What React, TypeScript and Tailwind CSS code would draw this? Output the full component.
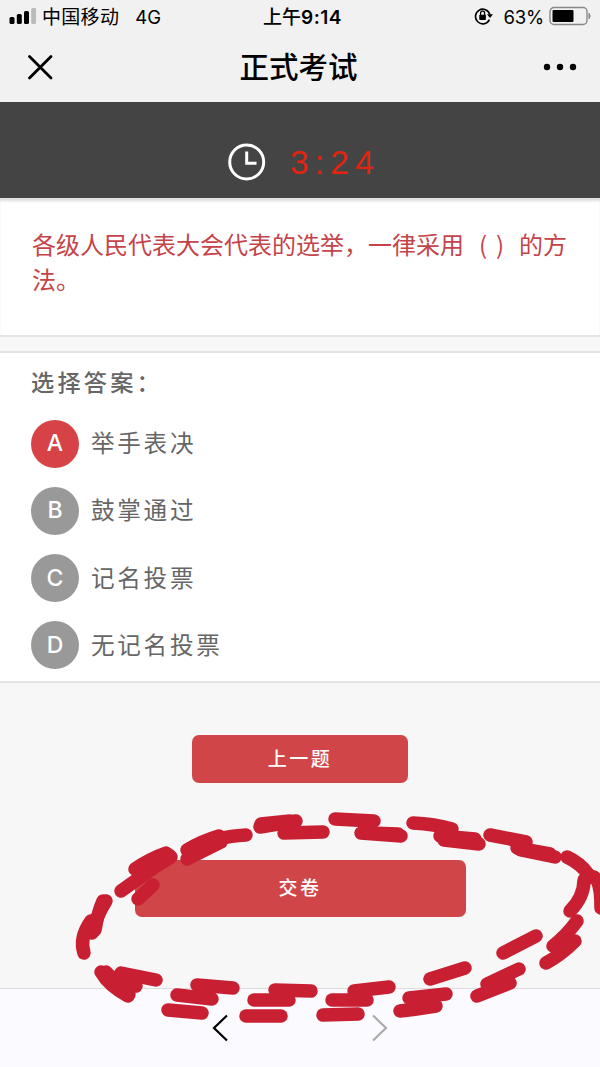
import { useState } from "react";

const OPTIONS = [
  { key: "A", text: "举手表决" },
  { key: "B", text: "鼓掌通过" },
  { key: "C", text: "记名投票" },
  { key: "D", text: "无记名投票" },
];

// hand-drawn dashes circling the submit button
const STROKES = [
  "M135 869Q149 859 166 853",
  "M138 872Q152 862 169 855",
  "M140 876L171 857",
  "M121 891L152 869",
  "M138 899L153 885",
  "M187 850Q202 841 219 836",
  "M194 853L221 840",
  "M187 859L221 842",
  "M200 846Q215 837 246 835",
  "M106 901Q96 917 92 933",
  "M103 901Q98 912 95 930",
  "M91 921Q79 938 84 953",
  "M101 972Q109 986 128 996",
  "M106 972Q116 984 129 994",
  "M104 974L136 986",
  "M121 973L156 980",
  "M197 985L233 988",
  "M177 995L212 999",
  "M168 1010L202 1013",
  "M260 827L296 821",
  "M261 824L290 821",
  "M284 833L323 832",
  "M335 819L374 821",
  "M361 833L401 836",
  "M369 833L398 834",
  "M275 990L311 991",
  "M254 1000L289 1000",
  "M246 1016L281 1016",
  "M354 991L389 987",
  "M332 1000L367 1000",
  "M323 1015L358 1014",
  "M413 823Q435 824 452 829",
  "M440 836L475 839",
  "M444 840L479 844",
  "M490 835L526 842",
  "M517 848L550 854",
  "M521 850L555 857",
  "M567 857Q580 863 588 874",
  "M584 880Q584 897 570 911",
  "M586 879Q601 868 601 908",
  "M577 921Q566 936 553 946",
  "M575 941Q561 955 546 963",
  "M536 936L503 953",
  "M519 969L487 984",
  "M510 983L477 996",
  "M465 968L430 979",
  "M446 994L409 998",
  "M436 1006Q418 1009 400 1011",
];

function StatusBar() {
  return (
    <div className="flex h-8 items-center pl-[9px] pr-2 font-['Inter','Noto_Sans_CJK_SC',sans-serif] text-[19px] leading-8 text-black">
      <div className="flex w-[250px] items-center">
        <svg width="27" height="18" viewBox="0 0 27 18">
          <rect x="0.5" y="10" width="5" height="7" rx="1.6" />
          <rect x="7.8" y="7" width="5" height="10" rx="1.6" />
          <rect x="15" y="4" width="5" height="13" rx="1.6" />
          <rect x="22.2" y="1" width="5" height="16" rx="1.6" fill="#bbb" />
        </svg>
        <span className="ml-1.5 pt-[3px] tracking-[0.3px]">中国移动</span>
        <span className="ml-4 pt-px text-[18.5px]">4G</span>
      </div>
      <div className="flex flex-1 items-center whitespace-nowrap pl-[4px] pt-[3px] font-medium">
        上午<span className="font-semibold tracking-[0.5px]">9:14</span>
      </div>
      <div className="flex items-center">
        <svg width="19" height="18" viewBox="0 0 19 18">
          <path d="M15.4 12.6A7.3 7.3 0 1 1 15.8 7.5" fill="none" stroke="#000" strokeWidth="1.6" />
          <path d="M13 7.2h6L16 11z" />
          <rect x="5.3" y="7.8" width="6.6" height="5.2" rx="0.8" />
          <path d="M6.6 8V6.2a2 2 0 0 1 4 0V8" fill="none" stroke="#000" strokeWidth="1.3" />
        </svg>
        <span className="ml-[11px] pt-px text-[18.5px] tracking-[-0.2px]">63%</span>
        <svg className="ml-[5px]" width="43" height="20" viewBox="0 0 43 20">
          <rect x="1" y="1.5" width="37" height="17" rx="4" fill="none" stroke="#888" strokeWidth="1.4" />
          <rect x="3.5" y="4" width="21" height="12" rx="1" />
          <path d="M40 7.2q2.4 2.8 0 5.6z" fill="#888" stroke="#888" />
        </svg>
      </div>
    </div>
  );
}

function TitleBar() {
  return (
    <div className="flex h-[70px] items-center justify-between pl-[27px] pr-[23px]">
      <svg width="27" height="27" viewBox="0 0 27 27">
        <path d="M2.5 2.5L24 24M24 2.5L2.5 24" fill="none" stroke="#000" strokeWidth="2.8" strokeLinecap="round" />
      </svg>
      <h1 className="pt-0.5 text-[29.5px] font-medium text-black">正式考试</h1>
      <svg width="34" height="8" viewBox="0 0 34 8">
        <circle cx="4" cy="4" r="3.2" />
        <circle cx="17" cy="4" r="3.2" />
        <circle cx="30" cy="4" r="3.2" />
      </svg>
    </div>
  );
}

export default function App() {
  const [selected, setSelected] = useState("A");

  return (
    <div className="relative flex h-[1067px] w-[600px] flex-col overflow-hidden bg-[#f7f7f7] font-['Liberation_Sans','Noto_Sans_CJK_SC',sans-serif]">
      <header className="h-[102px] shrink-0 bg-[#f1f1f1]">
        <StatusBar />
        <TitleBar />
      </header>

      <div className="flex h-24 shrink-0 items-center bg-[#444] pl-[228px] pt-6">
        <svg width="38" height="38" viewBox="0 0 38 38" fill="none" stroke="#fff" strokeWidth="3">
          <circle cx="18.7" cy="19" r="17" />
          <path d="M18.7 8.5V20.3H28.5" />
        </svg>
        <span className="ml-6 pt-0.5 text-[33.5px] leading-none tracking-[6.2px] text-[#e02410]">3:24</span>
      </div>

      <section className="h-[139px] shrink-0 border-b-2 border-[#e6e6e6] bg-white pl-8 pt-[28px] shadow-[inset_0_4px_3px_-1px_#ddd]">
        <div className="flex flex-col whitespace-nowrap font-['Noto_Sans_CJK_SC',sans-serif] text-[24px] leading-[35px] text-[#c4444a]">
          <div className="flex">
            <span>各级人民代表大会代表的选举，一律采用</span>
            <span className="w-[55px] pl-[15px] tracking-[9px]">()</span>
            <span>的方</span>
          </div>
          <span>法。</span>
        </div>
      </section>

      <section className="mt-[14px] flex h-[332px] shrink-0 flex-col border-y-2 border-[#e4e4e4] bg-white pl-[31px] pt-[13px]">
        <h2 className="pt-px text-[23.2px] font-medium leading-8 tracking-[3.2px] text-[#666]">选择答案：</h2>
        <ul className="mt-[20.5px] flex flex-col gap-[19.2px]">
          {OPTIONS.map((o) => (
            <li key={o.key} className="flex h-12 items-center gap-3" onClick={() => setSelected(o.key)}>
              <span
                className={`flex size-12 items-center justify-center rounded-full font-['Inter',sans-serif] text-[23px] font-medium text-white ${
                  selected === o.key ? "bg-[#d64245]" : "bg-[#999]"
                }`}
              >
                {o.key}
              </span>
              <span className="pt-[3px] text-[23.6px] tracking-[2.7px] text-[#666]">{o.text}</span>
            </li>
          ))}
        </ul>
      </section>

      <div className="flex flex-1 flex-col items-center pt-[52px]">
        <button className="h-12 w-[216px] rounded-[7px] bg-[#d04648] pt-0.5 text-[19px] font-medium tracking-[2.5px] text-white">
          上一题
        </button>
        <button className="mt-[77px] h-[57px] w-[331px] rounded-[7px] bg-[#d04648] pt-0.5 text-[19px] font-medium tracking-[2.5px] text-white">
          交卷
        </button>
      </div>

      <nav className="flex h-[79px] shrink-0 items-center justify-center gap-[142px] border-t border-[#ddd] bg-[#fafaff]">
        <svg width="17" height="28" viewBox="0 0 17 28">
          <path d="M15 1.5L2 14L15 26.5" fill="none" stroke="#000" strokeWidth="2.2" />
        </svg>
        <svg width="17" height="28" viewBox="0 0 17 28">
          <path d="M2 1.5L15 14L2 26.5" fill="none" stroke="#aaa" strokeWidth="2.2" />
        </svg>
      </nav>

      <svg
        className="pointer-events-none absolute inset-0"
        width="600"
        height="1067"
        viewBox="0 0 600 1067"
        fill="none"
        stroke="#c91f32"
        strokeWidth="13.5"
        strokeLinecap="round"
        strokeLinejoin="round"
      >
        {STROKES.map((d) => (
          <path key={d} d={d} />
        ))}
      </svg>
    </div>
  );
}
